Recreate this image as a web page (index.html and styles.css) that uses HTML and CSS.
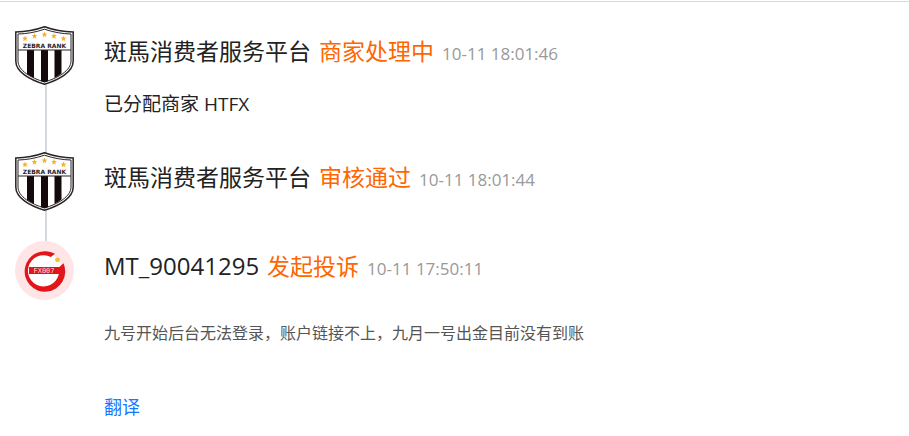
FILE: index.html
```html
<!DOCTYPE html>
<html lang="zh-CN">
<head>
    <meta charset="UTF-8">
    <meta name="viewport" content="width=device-width, initial-scale=1.0">
    <title>投诉进度</title>
    <link rel="stylesheet" href="styles.css">
</head>
<body>

    <main>
        <ul class="timeline">
            <li class="item">
                <svg class="avatar" viewBox="0 0 59 59" role="img" aria-label="ZEBRA RANK">
                    <symbol id="star" viewBox="0 0 10 10">
                        <path d="M5 0l1.3 3.4 3.6.2-2.8 2.3.9 3.6L5 7.5 2 9.5l.9-3.6L.1 3.6l3.6-.2z" fill="#f5b02e"/>
                    </symbol>
                    <!-- shield, reused by the next item -->
                    <g id="zebra">
                        <path d="M29.500 .8C20 4.200 10 5.800.8 5.900V35C.8 46 15 54 29.500 58.200 44 54 58.200 46 58.200 35V5.900C49 5.800 39 4.200 29.500.8z" fill="#fff" stroke="#2b2425" stroke-width="1.500"/>
                        <path d="M29.500 3.200C20 6.500 11 7.800 3 8V35C3 44.500 16 52 29.500 56 43 52 56 44.500 56 35V8C48 7.800 39 6.500 29.500 3.200z" fill="#fff" stroke="#2b2425" stroke-width="1"/>
                        <path d="M12 24h7v28q-4-1.800-7-4.200zM26 24h7v31l-3.500 1.200L26 55zM39.500 24h7v23.500q-3 2.500-7 4.500z" fill="#140a0b"/>
                        <path d="M3 24h53" stroke="#2b2425" stroke-width="1"/>
                        <use href="#star" x="7" y="9.500" width="6" height="6"/>
                        <use href="#star" x="16.500" y="7" width="6" height="6"/>
                        <use href="#star" x="26.500" y="5.500" width="6" height="6"/>
                        <use href="#star" x="36" y="7" width="6" height="6"/>
                        <use href="#star" x="45.500" y="9.500" width="6" height="6"/>
                        <text x="29.500" y="22" text-anchor="middle" class="zebra-text">ZEBRA RANK</text>
                    </g>
                </svg>
                <div class="content">
                    <div class="title">
                        <span class="name">斑馬消费者服务平台</span>
                        <span class="status">商家处理中</span>
                        <time>10-11 18:01:46</time>
                    </div>
                    <p class="message">已分配商家 HTFX</p>
                </div>
            </li>
            <li class="item">
                <svg class="avatar" viewBox="0 0 59 59" role="img" aria-label="ZEBRA RANK"><use href="#zebra"/></svg>
                <div class="content">
                    <div class="title">
                        <span class="name">斑馬消费者服务平台</span>
                        <span class="status">审核通过</span>
                        <time>10-11 18:01:44</time>
                    </div>
                </div>
            </li>
            <li class="item">
                <svg class="avatar" viewBox="0 0 59 59" role="img" aria-label="FX007">
                    <circle cx="29.500" cy="29.500" r="29.500" fill="#ffe5e6"/>
                    <circle cx="29.500" cy="29.500" r="17.500" fill="#fff"/>
                    <path d="M40 12.800A20.300 20.300 0 1 0 48.500 22.200L43.800 26.500A15.600 15.600 0 1 1 35.800 16z" fill="#e0161b"/>
                    <path d="M14 26h31v7H14z" fill="#e0161b"/>
                    <circle cx="42.500" cy="18.800" r="2.400" fill="#f2c230"/>
                    <text x="29" y="32" text-anchor="middle" class="fx-text">FX007</text>
                </svg>
                <div class="content">
                    <div class="title">
                        <span class="name user">MT_90041295</span>
                        <span class="status">发起投诉</span>
                        <time>10-11 17:50:11</time>
                    </div>
                    <p class="detail">九号开始后台无法登录，账户链接不上，九月一号出金目前没有到账</p>
                    <a class="translate" href="#">翻译</a>
                </div>
            </li>
        </ul>
    </main>

</body>
</html>
```
FILE: styles.css
```css
body {
    margin: 0;
    font-family: "Open Sans", "Noto Sans CJK SC", sans-serif;
    font-weight: 400;
    color: #222;
    background-color: #fff;
}

main {
    margin-top: 1px;
    border-top: 1px solid #d9d9d9;
}

.timeline {
    list-style: none;
    margin: 0;
    padding: 24px 15px 0;
}

.item {
    display: flex;
    gap: 30px;
    padding-bottom: 30px;
    background: linear-gradient(#d2d8de, #d2d8de) 30px 0 / 2px 100% no-repeat;
}

.item:last-child {
    padding-bottom: 0;
    background: none;
}

.avatar {
    flex: none;
    width: 59px;
    height: 59px;
}

.content {
    flex: 1;
}

.title {
    display: flex;
    align-items: baseline;
    gap: 8px;
    padding-top: 8px;
    font-size: 23px;
    line-height: 34px;
}

.user {
    font-size: 24px;
}

.status {
    color: #ff6600;
}

time {
    font-size: 17px;
    color: #999;
}

.message {
    margin: 17px 0 2px;
    font-size: 19px;
    line-height: 32px;
}

.detail {
    margin: 35px 0 0;
    font-size: 16px;
    line-height: 24px;
    color: #555;
}

.translate {
    display: inline-block;
    margin-top: 48px;
    font-size: 18px;
    line-height: 28px;
    color: #1677ff;
    text-decoration: none;
}

.zebra-text {
    font: bold 6px "DejaVu Sans", sans-serif;
    fill: #2b2425;
}

.fx-text {
    font: 7px "DejaVu Sans Mono", monospace;
    fill: #ffd9d9;
}
```
